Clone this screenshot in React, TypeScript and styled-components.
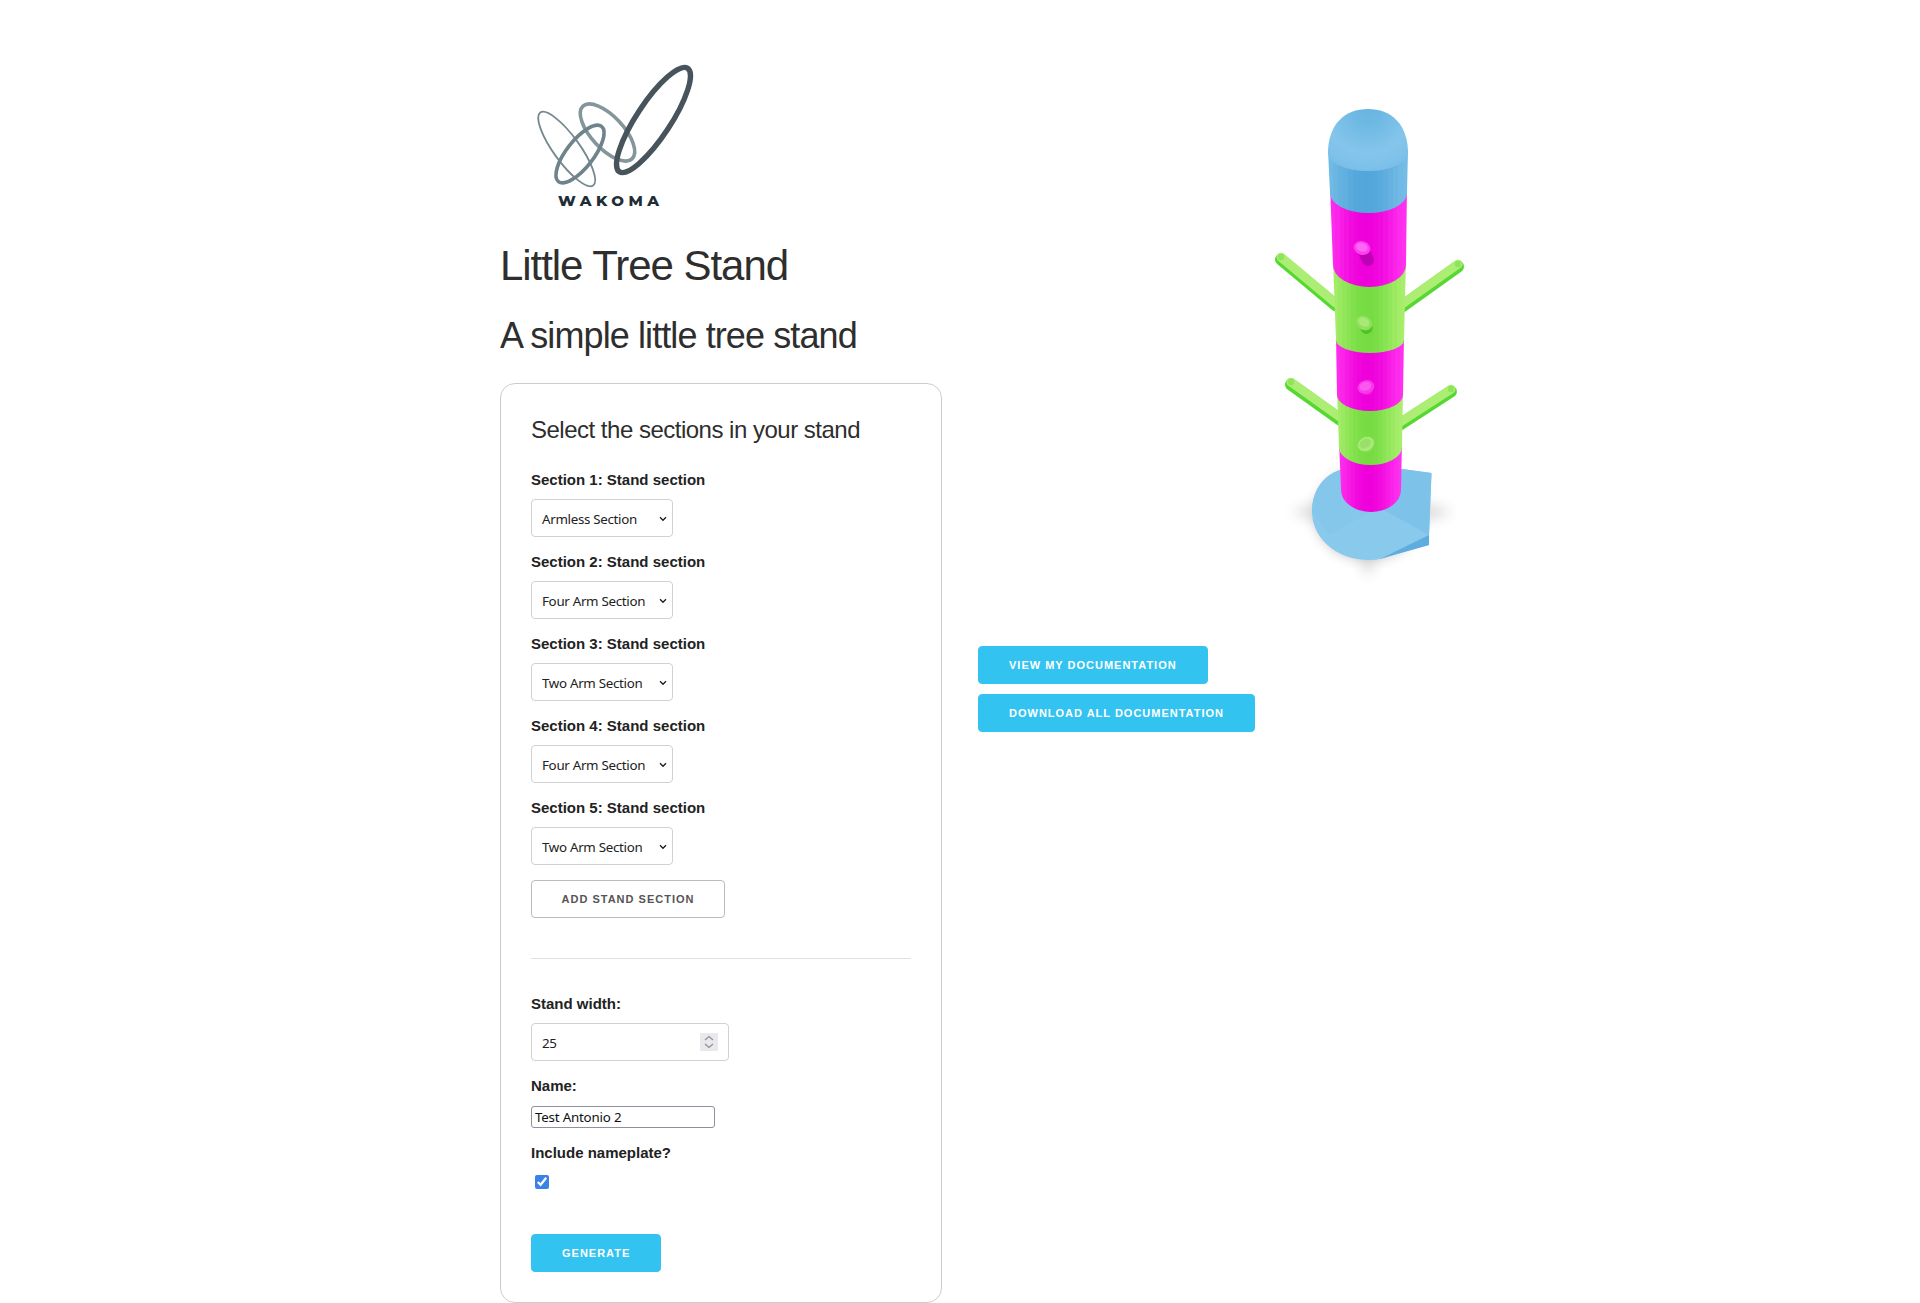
import React from "react";
import styled, { createGlobalStyle } from "styled-components";

const GlobalStyle = createGlobalStyle`
  html, body { margin: 0; padding: 0; background: #fff; }
  body {
    font-family: "Liberation Sans", Arial, sans-serif;
    font-size: 15px;
    line-height: 1.6;
    color: #222;
  }
`;

const Page = styled.div`
  width: 960px;
  height: 1303px;
  margin: 0 auto;
  padding: 40px 20px 0;
  box-sizing: border-box;
  display: flex;
  gap: 36px;
  align-items: flex-start;
`;

const LeftColumn = styled.main`
  width: 442px;
  flex: none;
`;

const RightColumn = styled.aside`
  display: flex;
  flex-direction: column;
  align-items: flex-start;
  gap: 10px;
`;

const LogoSvg = styled.svg`
  display: block;
  width: 300px;
  height: 200px;
`;

const LogoText = styled.text`
  font-family: "Montserrat", "Open Sans", "Liberation Sans", sans-serif;
  font-weight: 800;
  font-size: 15px;
  fill: #1f2d36;
`;

const TreeSvg = styled.svg`
  display: block;
  width: 520px;
  height: 596px;
`;

const Title = styled.h2`
  margin: 0 0 20px;
  font-size: 42px;
  font-weight: 300;
  line-height: 1.25;
  letter-spacing: -1.05px;
  color: #2e2e2e;
`;

const Subtitle = styled.h3`
  margin: 0 0 23.7px;
  font-size: 36px;
  font-weight: 300;
  line-height: 1.3;
  letter-spacing: -0.9px;
  color: #2e2e2e;
`;

const Card = styled.form`
  box-sizing: border-box;
  width: 442px;
  height: 920px;
  padding: 30px;
  border: 1px solid #ccc;
  border-radius: 15px;
`;

const CardHeading = styled.h5`
  margin: 0 0 22px;
  font-size: 24px;
  font-weight: 300;
  line-height: 32px;
  letter-spacing: -0.5px;
  color: #2e2e2e;
`;

const Label = styled.label`
  display: block;
  margin-bottom: 7px;
  font-weight: 700;
`;

const Select = styled.select`
  display: block;
  box-sizing: border-box;
  width: 142px;
  height: 38px;
  margin-bottom: 13px;
  padding: 7px 10px 5px;
  appearance: none;
  background: #fff url("data:image/svg+xml,%3Csvg xmlns='http://www.w3.org/2000/svg' width='8' height='6'%3E%3Cpath d='M1 1.2 L4 4.2 L7 1.2' fill='none' stroke='%23222' stroke-width='1.4'/%3E%3C/svg%3E") no-repeat right 5px top 16px;
  border: 1px solid #d1d1d1;
  border-radius: 4px;
  font-family: "Noto Sans", sans-serif;
  font-size: 13.33px;
  letter-spacing: -0.3px;
  color: #222;
`;

const Button = styled.button<{ $primary?: boolean }>`
  display: block;
  box-sizing: border-box;
  height: 38px;
  padding: 0 30px;
  border: 1px solid ${(p) => (p.$primary ? "#33c3f0" : "#bbb")};
  border-radius: 4px;
  background: ${(p) => (p.$primary ? "#33c3f0" : "transparent")};
  color: ${(p) => (p.$primary ? "#fff" : "#555")};
  font-family: "Liberation Sans", Arial, sans-serif;
  font-size: 11px;
  font-weight: 700;
  line-height: 36px;
  letter-spacing: 1px;
  text-transform: uppercase;
  white-space: nowrap;
`;

const AddButton = styled(Button)`
  margin-top: 15px;
  width: 194px;
  padding: 0;
`;

const Divider = styled.hr`
  margin: 40px 0 33px;
  border: 0;
  border-top: 1px solid #e1e1e1;
`;

const NumberInput = styled.input`
  display: block;
  box-sizing: border-box;
  width: 198px;
  height: 38px;
  margin-bottom: 13px;
  padding: 7px 10px 5px;
  background: #fff;
  border: 1px solid #d1d1d1;
  border-radius: 4px;
  font-family: "Noto Sans", sans-serif;
  font-size: 13.33px;
  letter-spacing: -0.3px;
  color: #222;
  &::-webkit-inner-spin-button {
    appearance: none;
    opacity: 1;
    width: 18px;
    height: 18px;
    margin-top: -1px;
    background: #e9e9ed url("data:image/svg+xml,%3Csvg xmlns='http://www.w3.org/2000/svg' width='18' height='18'%3E%3Cpath d='M5 7 L9 3.5 L13 7 M5 11 L9 14.5 L13 11' fill='none' stroke='%23909098' stroke-width='1.3'/%3E%3C/svg%3E") no-repeat center;
  }
`;

const TextInput = styled.input`
  display: block;
  box-sizing: border-box;
  width: 184px;
  height: 22px;
  margin: 8px 0 13px;
  padding: 1px 3px;
  background: #fff;
  border: 1px solid #8f8f9d;
  border-radius: 3px;
  font-family: "Noto Sans", sans-serif;
  font-size: 13.33px;
  letter-spacing: -0.2px;
  color: #111;
`;

const NameLabel = styled(Label)`
  margin-bottom: 0;
`;

const CheckRow = styled.div`
  height: 59px;
`;

const Check = styled.input`
  display: block;
  width: 14px;
  height: 14px;
  margin: 10px 0 0 4px;
  accent-color: #3b82e8;
`;

const SECTIONS = ["Armless Section", "Four Arm Section", "Two Arm Section", "Four Arm Section", "Two Arm Section"];
const OPTIONS = ["Armless Section", "Two Arm Section", "Four Arm Section"];

const hex = (c: string) => [1, 3, 5].map((i) => parseInt(c.slice(i, i + 2), 16));
const mix = (a: string, b: string, t: number) => {
  const [x, y] = [hex(a), hex(b)];
  return `rgb(${x.map((v, i) => Math.round(v + (y[i] - v) * t)).join(",")})`;
};

/* A cylinder is shaded in flat facets: bright at both rims, deepest just left of the middle. */
const Facets = ({ id, edge, centre }: { id: string; edge: string; centre: string }) => {
  const count = 16;
  const stops = Array.from({ length: count }, (_, i) => {
    const pos = (i + 0.5) / count;
    const t = Math.min(1, Math.cos((pos - 0.47) * Math.PI) ** 1.4);
    return mix(edge, centre, t);
  });
  return (
    <linearGradient id={id} x1="0" x2="1" y1="0" y2="0">
      {stops.map((c, i) => (
        <React.Fragment key={i}>
          <stop offset={i / count} stopColor={c} />
          <stop offset={(i + 1) / count} stopColor={c} />
        </React.Fragment>
      ))}
    </linearGradient>
  );
};

const segment = (l1: number, r1: number, top: number, l2: number, r2: number, side: number, ry: number) =>
  `M${l1},${top} L${l2},${side} A${(r2 - l2) / 2},${ry} 0 0 0 ${r2},${side} L${r1},${top} Z`;

const Arm = ({ x1, y1, x2, y2 }: { x1: number; y1: number; x2: number; y2: number }) => (
  <g strokeLinecap="round" fill="none">
    <path d={`M${x1},${y1 + 1.5} L${x2},${y2 + 1.5}`} stroke="#55d831" strokeWidth="12" />
    <path d={`M${x1},${y1 - 0.8} L${x2},${y2 - 0.8}`} stroke="#aced74" strokeWidth="9" />
    <circle cx={x1} cy={y1 - 1} r="3.2" fill="#8fe45c" stroke="none" />
  </g>
);

type PegProps = { x: number; y: number; rim: string; face: string; dark: string; rot: number; drop: number };
const Peg = ({ x, y, rim, face, dark, rot, drop }: PegProps) => (
  <g>
    <path d={`M${x + 1},${y + 2} L${x + drop / 2 + 1},${y + drop + 2}`} stroke={dark} strokeWidth="12" strokeLinecap="round" />
    <ellipse cx={x} cy={y} rx="8.5" ry="6.8" fill={rim} transform={`rotate(${rot} ${x} ${y})`} />
    <ellipse cx={x - 0.5} cy={y - 0.8} rx="6" ry="4.4" fill={face} transform={`rotate(${rot} ${x} ${y})`} />
  </g>
);

const BASE = "M1340,470 C1322,476 1312,492 1312,512 C1312,536 1334,560 1370,560 C1378,560 1384,558 1390,556 L1429,545 L1429,535 L1431.5,473 L1402,469 Z";

const Tree = () => (
  <TreeSvg viewBox="978 40 520 596">
    <defs>
      <Facets id="mag" edge="#ff30ee" centre="#ee00da" />
      <Facets id="grn" edge="#a8ee6c" centre="#76dc42" />
      <Facets id="blu" edge="#74bce6" centre="#52a6db" />
      <radialGradient id="dome" gradientUnits="userSpaceOnUse" cx="1368" cy="112" r="68">
        <stop offset="0" stopColor="#69b5e1" />
        <stop offset="0.2" stopColor="#6eb9e4" />
        <stop offset="0.4" stopColor="#7abfe8" />
        <stop offset="0.62" stopColor="#84c5ec" />
        <stop offset="0.85" stopColor="#7cc0e9" />
        <stop offset="1" stopColor="#70b9e6" />
      </radialGradient>
      <filter id="soft" x="-40%" y="-40%" width="180%" height="180%">
        <feGaussianBlur stdDeviation="7" />
      </filter>
    </defs>

    <g filter="url(#soft)" fill="#000" opacity="0.3">
      <ellipse cx="1368" cy="514" rx="52" ry="44" />
      <ellipse cx="1372" cy="512" rx="78" ry="8" opacity="0.6" />
      <ellipse cx="1368" cy="540" rx="7" ry="36" opacity="0.5" />
    </g>

    <path d={BASE} fill="#89c9ec" />
    <path d="M1375,505 L1402,469 L1431.5,473 L1429,535 Z" fill="#7dc2e9" />
    <path d="M1312,512 C1312,492 1322,476 1340,470 L1370,512 L1330,535 Z" fill="#85c7eb" />
    <path d="M1380,559 L1429,535 L1429,545 L1390,556 Z" fill="#5fade0" />

    <Arm x1={1281} y1={258} x2={1336} y2={304} />
    <Arm x1={1458} y1={265} x2={1402} y2={305} />
    <Arm x1={1291} y1={383} x2={1340} y2={418} />
    <Arm x1={1451} y1={390} x2={1400} y2={423} />

    <path d={segment(1339, 1402, 440, 1341, 1401, 490, 22)} fill="url(#mag)" />
    <path d={segment(1337, 1403, 390, 1339, 1402, 447, 18)} fill="url(#grn)" />
    <path d={segment(1336, 1404, 335, 1337, 1403, 395, 16)} fill="url(#mag)" />
    <path d={segment(1333, 1406, 260, 1336, 1404, 340, 13)} fill="url(#grn)" />
    <path d={segment(1330, 1407, 185, 1333, 1406, 265, 22)} fill="url(#mag)" />
    <path d={segment(1328, 1408, 150, 1330, 1407, 193, 20)} fill="url(#blu)" />
    <path d="M1328,153 C1328,124 1345,109 1368,109 C1391,109 1408,124 1408,153 A40,18 0 0 1 1328,153 Z" fill="url(#dome)" />

    <Peg x={1362} y={248} rim="#ff3cf0" face="#ff66f4" dark="#c000b4" rot={20} drop={10} />
    <Peg x={1364} y={323} rim="#8fe05a" face="#a8e878" dark="#4cc426" rot={30} drop={3} />
    <Peg x={1366} y={387} rim="#f838ea" face="#fa58ee" dark="#f020de" rot={-15} drop={0} />
    <Peg x={1366} y={444} rim="#a8ea78" face="#98e068" dark="#86e050" rot={-30} drop={0} />
  </TreeSvg>
);

const Logo = () => (
  <LogoSvg viewBox="500 40 300 200">
    <g fill="none">
      <ellipse cx="566.7" cy="149" rx="45" ry="13" transform="rotate(54 566.7 149)" stroke="#76888f" strokeWidth="1.8" />
      <ellipse cx="607.5" cy="132.5" rx="36" ry="16" transform="rotate(47 607.5 132.5)" stroke="#84969c" strokeWidth="3.6" />
      <ellipse cx="580" cy="154" rx="35" ry="13.5" transform="rotate(-52 580 154)" stroke="#6f838b" strokeWidth="3.6" />
      <ellipse cx="653.5" cy="120" rx="62" ry="17" transform="rotate(-56.6 653.5 120)" stroke="#47545c" strokeWidth="5.4" />
    </g>
    <LogoText x="558" y="205.5" textLength="101" lengthAdjust="spacing">WAKOMA</LogoText>
  </LogoSvg>
);

export default function App() {
  return (
    <>
      <GlobalStyle />
      <Page>
        <LeftColumn>
          <Logo />
          <Title>Little Tree Stand</Title>
          <Subtitle>A simple little tree stand</Subtitle>
          <Card onSubmit={(e) => e.preventDefault()}>
            <CardHeading>Select the sections in your stand</CardHeading>
            {SECTIONS.map((value, i) => (
              <div key={i}>
                <Label>Section {i + 1}: Stand section</Label>
                <Select defaultValue={value}>
                  {OPTIONS.map((o) => (
                    <option key={o}>{o}</option>
                  ))}
                </Select>
              </div>
            ))}
            <AddButton type="button">Add stand section</AddButton>
            <Divider />
            <Label>Stand width:</Label>
            <NumberInput type="number" defaultValue={25} />
            <NameLabel>Name:</NameLabel>
            <TextInput type="text" defaultValue="Test Antonio 2" />
            <Label>Include nameplate?</Label>
            <CheckRow>
              <Check type="checkbox" defaultChecked />
            </CheckRow>
            <Button type="submit" $primary>Generate</Button>
          </Card>
        </LeftColumn>
        <RightColumn>
          <Tree />
          <Button type="button" $primary>View my documentation</Button>
          <Button type="button" $primary>Download all documentation</Button>
        </RightColumn>
      </Page>
    </>
  );
}
